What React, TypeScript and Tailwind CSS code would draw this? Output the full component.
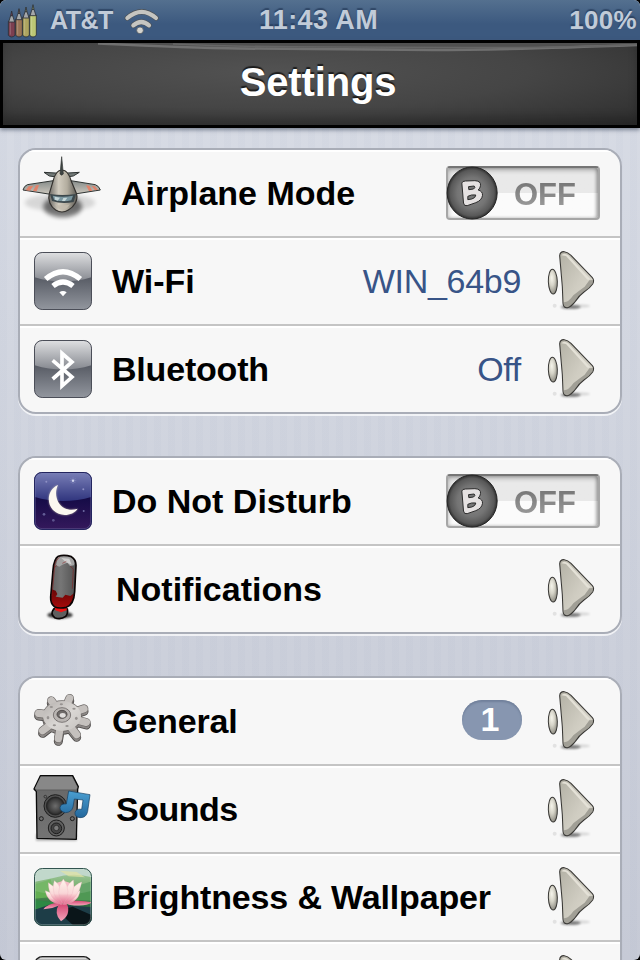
import type { ReactNode } from "react";
import clsx from "clsx";

function IconDefs() {
  return (
    <svg className="absolute h-0 w-0" aria-hidden="true">
      <defs>
        <linearGradient id="steelGloss" x1="0" y1="0" x2="0" y2="1">
          <stop offset="0" stopColor="#dedfe1" />
          <stop offset="1" stopColor="#85888f" />
        </linearGradient>
        <linearGradient id="steelBase" x1="0" y1="0" x2="0" y2="1">
          <stop offset="0.45" stopColor="#595d66" />
          <stop offset="1" stopColor="#92969e" />
        </linearGradient>
        <linearGradient id="night" x1="0" y1="0" x2="0" y2="1">
          <stop offset="0.4" stopColor="#120a45" />
          <stop offset="1" stopColor="#35195c" />
        </linearGradient>
        <linearGradient id="nightGloss" x1="0" y1="0" x2="0" y2="1">
          <stop offset="0" stopColor="#7a80b8" />
          <stop offset="1" stopColor="#30357e" />
        </linearGradient>
        <linearGradient id="stone" x1="0" y1="0" x2="1" y2="1">
          <stop offset="0" stopColor="#b3b1a5" />
          <stop offset="0.55" stopColor="#cfccc1" />
          <stop offset="1" stopColor="#dddacf" />
        </linearGradient>
        <radialGradient id="pebble" cx="0.4" cy="0.35" r="0.7">
          <stop offset="0" stopColor="#f6f5ec" />
          <stop offset="0.45" stopColor="#d5d3c7" />
          <stop offset="1" stopColor="#85837a" />
        </radialGradient>
        <linearGradient id="fuselage" x1="0" y1="0" x2="1" y2="0">
          <stop offset="0" stopColor="#6a6762" />
          <stop offset="0.35" stopColor="#d2ccbf" />
          <stop offset="0.65" stopColor="#b3ad9f" />
          <stop offset="1" stopColor="#5b5954" />
        </linearGradient>
        <linearGradient id="wing" x1="0" y1="0" x2="0" y2="1">
          <stop offset="0" stopColor="#858b89" />
          <stop offset="1" stopColor="#cdc8be" />
        </linearGradient>
        <linearGradient id="blade" x1="0" y1="0" x2="1" y2="0">
          <stop offset="0" stopColor="#606060" />
          <stop offset="0.4" stopColor="#767676" />
          <stop offset="1" stopColor="#515151" />
        </linearGradient>
        <linearGradient id="blood" x1="0" y1="0" x2="0" y2="1">
          <stop offset="0" stopColor="#650606" />
          <stop offset="1" stopColor="#a60a0a" />
        </linearGradient>
        <linearGradient id="gearTop" x1="0" y1="0" x2="1" y2="1">
          <stop offset="0" stopColor="#b4b0ad" />
          <stop offset="0.55" stopColor="#dad7d4" />
          <stop offset="1" stopColor="#c6c3c0" />
        </linearGradient>
        <linearGradient id="cabinet" x1="0" y1="0" x2="0" y2="1">
          <stop offset="0" stopColor="#666" />
          <stop offset="1" stopColor="#747474" />
        </linearGradient>
        <radialGradient id="cone">
          <stop offset="0" stopColor="#6d6d6d" />
          <stop offset="0.75" stopColor="#3c3c3c" />
          <stop offset="1" stopColor="#232323" />
        </radialGradient>
        <linearGradient id="note" x1="0" y1="0" x2="0" y2="1">
          <stop offset="0" stopColor="#4b9fd2" />
          <stop offset="1" stopColor="#23679c" />
        </linearGradient>
        <linearGradient id="pond" x1="0" y1="0" x2="0" y2="1">
          <stop offset="0" stopColor="#9dc49a" />
          <stop offset="0.35" stopColor="#65a659" />
          <stop offset="0.65" stopColor="#2c6a40" />
          <stop offset="1" stopColor="#142d33" />
        </linearGradient>
        <linearGradient id="petal" x1="0" y1="0" x2="0" y2="1">
          <stop offset="0" stopColor="#fff6ea" />
          <stop offset="0.55" stopColor="#f9d0d2" />
          <stop offset="1" stopColor="#df6288" />
        </linearGradient>
        <linearGradient id="petalLow" x1="0" y1="0" x2="0" y2="1">
          <stop offset="0" stopColor="#d44873" />
          <stop offset="1" stopColor="#f4a5bb" />
        </linearGradient>
        <radialGradient id="knob" cx="0.5" cy="0.5" r="0.5">
          <stop offset="0" stopColor="#8b8b8b" />
          <stop offset="0.6" stopColor="#747474" />
          <stop offset="0.88" stopColor="#585858" />
          <stop offset="1" stopColor="#2f2f2f" />
        </radialGradient>
        <filter id="soft" x="-30%" y="-60%" width="160%" height="220%">
          <feGaussianBlur stdDeviation="6" />
        </filter>
        <filter id="softer" x="-30%" y="-60%" width="160%" height="220%">
          <feGaussianBlur stdDeviation="3" />
        </filter>
        <clipPath id="sleepTile">
          <rect x="73" y="67" width="172" height="172" rx="22" />
        </clipPath>
        <clipPath id="lotusTile">
          <rect x="73" y="55" width="172" height="172" rx="24" />
        </clipPath>
      </defs>
    </svg>
  );
}

function AirplaneIcon() {
  return (
    <svg viewBox="36 30 240 258" className="h-[86px] w-20">
      <ellipse cx="150" cy="188" rx="106" ry="26" fill="#000" opacity="0.13" filter="url(#soft)" />
      <ellipse cx="158" cy="200" rx="58" ry="32" fill="#000" opacity="0.5" filter="url(#soft)" />
      <g stroke="#2e3332" strokeWidth="3" strokeLinejoin="round">
        <path d="M152 100 102 97 118 108 148 112Z" fill="#737a78" />
        <path d="M158 100 208 97 190 108 162 112Z" fill="#737a78" />
        <path d="M130 122 52 134Q42 138 39 150L122 163Z" fill="url(#wing)" />
        <path d="M182 122 256 134Q267 138 271 150L194 162Z" fill="url(#wing)" />
      </g>
      <path d="M56 139 70 137 60 152 47 151ZM78 136 87 135 80 154 69 153ZM228 136 238 137 247 152 237 153ZM245 138 254 139 264 149 255 151Z" fill="#e0826a" />
      <path
        d="M156 90C141 90 134 102 129 124L118 160C112 180 122 200 137 210Q156 222 175 210C192 200 206 180 199 160L184 124C178 102 171 90 156 90Z"
        fill="url(#fuselage)"
        stroke="#33312e"
        strokeWidth="3.5"
      />
      <path d="M120 162Q157 168 198 162L191 186Q156 194 126 183Z" fill="#3c484c" />
      <path d="M128 167Q157 173 189 167L184 181Q158 187 132 179Z" fill="#7b97a0" />
      <path d="m134 170 16 3-7 9-8-3ZM160 174l12-1-7 10h-9Z" fill="#c5d6d8" />
      <path d="M134 193q22 7 46 0l-10 12q-13 7-26 0Z" fill="#c3bcae" opacity="0.8" />
      <path d="M155 50 150 102Q155 109 160 102Z" fill="#3e4443" stroke="#333837" strokeWidth="2" />
    </svg>
  );
}

function WifiIcon() {
  return (
    <svg viewBox="72 -6 174 258" className="h-[86px] w-[58px]">
      <rect x="73.5" y="37.5" width="171" height="171" rx="23" fill="url(#steelBase)" />
      <path d="M74 112V60Q74 38 97 38H222Q244 38 244 60V112Q159 138 74 112Z" fill="url(#steelGloss)" />
      <rect x="73.5" y="37.5" width="171" height="171" rx="23" fill="none" stroke="#4b4e58" strokeWidth="3" />
      <g fill="none" stroke="#fff" strokeWidth="16">
        <path d="M107 117Q159 73 211 117" />
        <path d="M129 138Q159 114 189 138" />
      </g>
      <path d="M148 157Q159 149 170 157L159 169Z" fill="#fff" />
    </svg>
  );
}

function BluetoothIcon() {
  return (
    <svg viewBox="72 258 174 258" className="h-[86px] w-[58px]">
      <rect x="73.5" y="301.5" width="171" height="171" rx="23" fill="url(#steelBase)" />
      <path d="M74 376V324Q74 302 97 302H222Q244 302 244 324V376Q159 402 74 376Z" fill="url(#steelGloss)" />
      <rect x="73.5" y="301.5" width="171" height="171" rx="23" fill="none" stroke="#4b4e58" strokeWidth="3" />
      <path d="M128 361 186 411 156 438V340L186 366 128 417" fill="none" stroke="#fff" strokeWidth="11" />
    </svg>
  );
}

function MoonIcon() {
  return (
    <svg viewBox="72 24 174 258" className="h-[86px] w-[58px]">
      <g clipPath="url(#sleepTile)">
        <rect x="72" y="66" width="174" height="174" fill="url(#night)" />
        <path d="M72 66H246V140Q159 166 72 140Z" fill="url(#nightGloss)" />
      </g>
      <path d="M144 105C114 118 107 157 130 181C151 202 188 198 203 176C181 184 157 177 146 158C136 141 136 121 144 105Z" fill="#d7cdb5" opacity="0.7" filter="url(#softer)" />
      <path d="M144 105C114 118 107 157 130 181C151 202 188 198 203 176C181 184 157 177 146 158C136 141 136 121 144 105Z" fill="#fbf8f0" />
      <path d="M189 82V102M179 92H199M182 85l14 14M196 85l-14 14" stroke="#a4a9d6" strokeWidth="1" />
      <circle cx="189" cy="92" r="3.5" fill="#d0d4ee" />
      <g fill="#8e90c4">
        <circle cx="109" cy="95" r="3" />
        <circle cx="220" cy="118" r="3" />
        <circle cx="221" cy="183" r="3" opacity="0.7" />
        <circle cx="102" cy="193" r="4" opacity="0.6" />
        <circle cx="130" cy="211" r="4" opacity="0.5" />
      </g>
      <rect x="76" y="70" width="166" height="166" rx="20" fill="none" stroke="#8084b8" strokeWidth="2" opacity="0.55" />
      <rect x="73.5" y="67.5" width="171" height="171" rx="22" fill="none" stroke="#23255f" strokeWidth="3" />
    </svg>
  );
}

function BladeIcon() {
  return (
    <svg viewBox="72 288 174 258" className="h-[86px] w-[58px]">
      <ellipse cx="150" cy="495" rx="38" ry="11" fill="#000" opacity="0.75" filter="url(#softer)" />
      <path d="M131 477Q150 466 172 477Q175 490 167 499Q152 510 134 503Q120 492 131 477Z" fill="#5f5f5f" stroke="#0b0505" strokeWidth="5" />
      <path d="M134 472h36v9l-17 6-17-6Z" fill="#f01414" />
      <path
        d="M145 319Q162 313 184 320Q198 328 198 346L194 424Q192 464 169 472Q147 477 133 470Q121 460 122 441L129 360Q132 326 145 319Z"
        fill="url(#blade)"
      />
      <path d="M145 319Q162 313 184 320Q196 330 192 346L180 348 172 338 157 344 148 350 138 346Z" fill="#a3a3a3" />
      <path d="M154 324 178 326 185 344 167 336Z" fill="#e2e2e2" opacity="0.7" />
      <path d="M125 418 137 422 142 432 137 440 158 443 166 434 181 438 192 430Q190 464 169 471Q147 476 133 468Q122 458 123 441Z" fill="url(#blood)" />
      <path d="M181 348 190 358 187 416M134 352 141 346M157 340 169 334" fill="none" stroke="#8d1717" strokeWidth="1.5" />
      <path
        d="M145 319Q162 313 184 320Q198 328 198 346L194 424Q192 464 169 472Q147 477 133 470Q121 460 122 441L129 360Q132 326 145 319Z"
        fill="none"
        stroke="#0b0505"
        strokeWidth="5"
      />
      <path d="M149 322Q132 332 133 360L126 438" fill="none" stroke="#901111" strokeWidth="1.5" />
    </svg>
  );
}

const TEETH = "M156 138 179 85M156 138 124 92M156 138 86 130M156 138 98 182M156 138 145 206M156 138 200 194M156 138 229 157M156 138 222 116";

function GearIcon() {
  return (
    <svg viewBox="72 24 174 258" className="h-[86px] w-[58px]">
      <g fill="none" strokeLinecap="round" transform="translate(0 8)">
        <path d={TEETH} stroke="#4a4746" strokeWidth="27" />
        <ellipse cx="156" cy="138" rx="59" ry="48" fill="#4a4746" />
        <path d={TEETH} stroke="#8b8785" strokeWidth="22" />
        <ellipse cx="156" cy="138" rx="57" ry="46" fill="#8b8785" />
      </g>
      <g fill="none" strokeLinecap="round">
        <path d={TEETH} stroke="#6b6765" strokeWidth="26" />
        <ellipse cx="156" cy="138" rx="59" ry="47" fill="#6b6765" />
        <path d={TEETH} stroke="#c5c1be" strokeWidth="22" />
      </g>
      <ellipse cx="156" cy="138" rx="57" ry="45" fill="url(#gearTop)" />
      <g fill="#979391">
        <ellipse cx="154" cy="103" rx="5" ry="3" />
        <ellipse cx="124" cy="111" rx="5" ry="3" />
        <ellipse cx="114" cy="143" rx="4" ry="5" />
        <ellipse cx="133" cy="166" rx="5" ry="3" />
        <ellipse cx="171" cy="168" rx="5" ry="3" />
        <ellipse cx="199" cy="145" rx="4" ry="5" />
        <ellipse cx="192" cy="116" rx="5" ry="3" />
      </g>
      <ellipse cx="156" cy="135" rx="26" ry="22" fill="#b9b5b2" stroke="#6c6866" strokeWidth="2.5" />
      <ellipse cx="156" cy="133" rx="15" ry="12" fill="#6f6b69" stroke="#484543" strokeWidth="2.5" />
      <ellipse cx="158" cy="136" rx="9" ry="7" fill="#e0dedc" />
    </svg>
  );
}

function SpeakerIcon() {
  return (
    <svg viewBox="69 288 174 258" className="h-[86px] w-[58px]">
      <rect x="78" y="492" width="122" height="20" fill="#000" opacity="0.3" filter="url(#softer)" />
      <path d="M91 317H188L205 350 203 358 199 508 81 505 79 365 72 357Z" fill="url(#cabinet)" stroke="#0a0a0a" strokeWidth="4" strokeLinejoin="round" />
      <path d="M92 320H186L202 352 198 359H80L75 355Z" fill="#888" />
      <path d="M78 360H200" stroke="#555" strokeWidth="2" />
      <g stroke="#1d1d1d">
        <circle cx="136" cy="408" r="34" fill="#505050" strokeWidth="3" />
        <circle cx="136" cy="408" r="27" fill="url(#cone)" strokeWidth="2" />
        <circle cx="139" cy="474" r="24" fill="#606060" strokeWidth="3" />
        <circle cx="139" cy="475" r="16" fill="#454545" strokeWidth="3" />
        <circle cx="139" cy="474" r="8" fill="#7b7b7b" strokeWidth="2" />
        <circle cx="94" cy="446" r="6" fill="#6f6f6f" strokeWidth="3" />
        <circle cx="187" cy="446" r="6" fill="#6f6f6f" strokeWidth="3" />
        <circle cx="106" cy="380" r="4" fill="#6f6f6f" strokeWidth="2" />
      </g>
      <path
        d="M176 363 240 374 233 424Q229 444 210 443Q194 441 195 428Q197 415 215 418L219 390 193 387 189 411Q185 427 166 428Q150 424 150 413Q152 400 169 402Z"
        fill="url(#note)"
        stroke="#123e62"
        strokeWidth="2"
        strokeLinejoin="round"
      />
    </svg>
  );
}

function LotusIcon() {
  return (
    <svg viewBox="72 12 174 258" className="h-[86px] w-[58px]">
      <g clipPath="url(#lotusTile)">
        <rect x="72" y="54" width="174" height="174" fill="url(#pond)" />
        <path d="M72 54H246V82Q190 66 130 84L72 96Z" fill="#b9d3c4" />
        <path d="M150 62 200 66 225 82 176 79Z" fill="#dfdf98" opacity="0.7" />
        <path d="M72 104 122 88 134 140 72 146Z" fill="#62ae52" />
        <path d="M200 108 246 94V152L190 150Z" fill="#4f9854" />
        <path d="M72 150 144 158 92 180 72 176Z" fill="#2d8844" />
        <path d="M72 180 124 162 246 172V228H72Z" fill="#1d3d47" />
        <path d="M144 182 188 170 246 196V228H192L172 210Z" fill="#0a1519" />
        <path d="M150 158Q116 157 100 178Q128 176 154 164Z" fill="url(#petalLow)" />
        <path d="M166 155Q208 148 246 157Q226 172 176 164Z" fill="url(#petalLow)" />
        <path d="M147 162Q130 192 153 214Q184 194 171 162Z" fill="url(#petalLow)" />
        <path d="M122 118 136 100 160 92 184 100 200 118 178 160 146 160Z" fill="#f4b5c0" />
        <g fill="url(#petal)" stroke="#eba9b8" strokeWidth="1">
          <path d="M106 122Q134 130 152 163Q112 158 106 122Z" />
          <path d="M210 122Q184 130 166 163Q206 156 210 122Z" />
          <path d="M115 98Q148 116 154 164Q116 148 115 98Z" />
          <path d="M215 96Q178 110 164 164Q206 146 215 96Z" />
          <path d="M133 92Q160 110 156 164Q120 136 133 92Z" />
          <path d="M190 90Q158 112 162 164Q198 134 190 90Z" />
          <path d="M160 87Q132 128 160 164Q188 126 160 87Z" />
        </g>
        <path d="M72 54H246V122Q159 146 72 122Z" fill="#fff" opacity="0.12" />
      </g>
      <rect x="76" y="58" width="166" height="166" rx="21" fill="none" stroke="#d7e8e2" strokeWidth="2" opacity="0.5" />
      <rect x="73.5" y="55.5" width="171" height="171" rx="24" fill="none" stroke="#31534f" strokeWidth="3" />
    </svg>
  );
}

function BlankTileIcon() {
  return (
    <svg viewBox="72 276 174 258" className="h-[86px] w-[58px]">
      <rect x="75" y="320" width="168" height="170" rx="22" fill="#b4b4b4" stroke="#1d1d1d" strokeWidth="4" />
      <path d="M90 325H228" stroke="#dedede" strokeWidth="3" />
    </svg>
  );
}

function Arrow() {
  return (
    <svg viewBox="348 294 156 258" className="mr-[22px] h-[86px] w-[52px] shrink-0">
      <ellipse cx="422" cy="501" rx="30" ry="6" fill="#000" opacity="0.45" filter="url(#softer)" />
      <ellipse cx="448" cy="498" rx="32" ry="5" fill="#000" opacity="0.12" filter="url(#softer)" />
      <circle cx="374" cy="497" r="6" fill="#e2e2e2" />
      <ellipse cx="368.5" cy="425" rx="13.5" ry="37" fill="url(#pebble)" stroke="#3a3936" strokeWidth="3" transform="rotate(-2 368 425)" />
      <path
        d="M389 347Q390 334 403 335Q413 336 423 346L487 413Q494 421 488 432Q480 444 462 456Q448 466 436 484Q424 500 412 503Q400 504 399 490L397 440Z"
        fill="url(#stone)"
      />
      <path d="M478 421 489 420Q491 431 472 447 448 464 436 482 422 501 410 501 400 500 401 487 415 488 430 466 447 452 464 440Z" fill="#a19f96" />
      <path d="M394 346Q402 337 415 346L481 418Q475 421 471 418L408 348Z" fill="#e4e1d7" />
      <path
        d="M389 347Q390 334 403 335Q413 336 423 346L487 413Q494 421 488 432Q480 444 462 456Q448 466 436 484Q424 500 412 503Q400 504 399 490L397 440Z"
        fill="none"
        stroke="#3a3936"
        strokeWidth="3.2"
      />
    </svg>
  );
}

function Toggle() {
  return (
    <div className="mr-5 flex h-[54px] w-[154px] shrink-0 items-center rounded-[4px] border-2 border-[#a6a6a6] border-t-[#757575] bg-linear-to-b from-[#e9e9e9] from-50% to-[#fbfbfb] to-50% shadow-[inset_0_2px_5px_rgba(0,0,0,0.3),inset_-2px_0_3px_rgba(0,0,0,0.2)]">
      <svg viewBox="50 77 155 162" className="-ml-[2px] h-[54px] w-[52px] shrink-0">
        <ellipse cx="128" cy="158" rx="75" ry="78" fill="url(#knob)" stroke="#252525" strokeWidth="3" />
        <path
          d="M97 128Q98 122 108 122L136 121Q155 122 153 136Q152 144 146 149Q160 153 159 165Q157 180 139 187L113 196Q103 198 102 188Z"
          fill="#e5e1e1"
          stroke="#2b2b2b"
          strokeWidth="3"
        />
        <path d="M117 139 134 137Q139 142 132 146L118 148ZM115 168Q125 162 139 164Q138 173 127 176L115 178Z" fill="#777" stroke="#2b2b2b" strokeWidth="3" />
      </svg>
      <span className="mt-[3px] ml-4 bg-linear-to-b from-[#707070] to-[#a3a3a3] bg-clip-text text-[31px] leading-9 font-bold text-transparent">OFF</span>
    </div>
  );
}

interface RowProps {
  icon: ReactNode;
  label: string;
  value?: string;
  badge?: number;
  toggle?: boolean;
  iconClass?: string;
  labelClass?: string;
}

function Row({ icon, label, value, badge, toggle, iconClass = "ml-3.5", labelClass = "ml-5" }: RowProps) {
  return (
    <div className="flex h-22 shrink-0 items-center border-b-2 border-[#c4c4c4] shadow-[inset_0_2px_0_#fff] last:h-[86px] last:border-b-0">
      <div className={clsx("shrink-0", iconClass)}>{icon}</div>
      <span className={clsx("flex-1 text-[34px] leading-10 font-bold whitespace-nowrap text-black", labelClass)}>{label}</span>
      {value && <span className="mr-[25px] text-[34px] leading-10 tracking-[-0.3px] text-[#385487]">{value}</span>}
      {badge && (
        <span className="mr-6 flex h-10 w-[60px] -translate-y-px items-center justify-center rounded-full bg-[#8796b0] pr-1 pb-0.5 text-[34px] leading-none font-bold text-white shadow-[inset_0_2px_2px_#71809b]">
          {badge}
        </span>
      )}
      {toggle ? <Toggle /> : <Arrow />}
    </div>
  );
}

function Group({ children }: { children: ReactNode }) {
  return (
    <section className="shrink-0 overflow-hidden rounded-[18px] border-2 border-[#a9adb7] bg-[#f7f7f7] shadow-[0_2px_0_rgba(255,255,255,0.7)]">
      {children}
    </section>
  );
}

function StatusBar() {
  return (
    <header className="flex h-10 shrink-0 items-center bg-linear-to-b from-[#54708f] to-[#3c597f] to-60% text-[26px] leading-10 font-bold text-[#c1cbd8] [text-shadow:0_-2px_1px_rgba(30,50,80,0.6)]">
      <div className="flex flex-1 items-center">
        <svg viewBox="21 0 93 120" className="ml-[7px] h-10 w-[31px]">
          {[
            { x: 25, y: 64, c: "#7c3f50" },
            { x: 47, y: 57, c: "#997455" },
            { x: 68, y: 52, c: "#ada45f" },
            { x: 89, y: 45, c: "#bcc774" },
          ].map((p) => (
            <g key={p.x} transform={`translate(${p.x} ${p.y})`} stroke="#2b3037" strokeWidth="2.5">
              <path d={`M0 0V${106 - p.y}Q10 ${116 - p.y} 20 ${106 - p.y}V0Z`} fill={p.c} />
              <path d="M1 2 7-17H13L19 2Z" fill="#a4a7a9" />
              <path d="M7-17 10-31 13-17Z" fill={p.c} />
              <path d={`M6 4V${104 - p.y}`} stroke="#fff" strokeOpacity="0.2" strokeWidth="3" />
            </g>
          ))}
        </svg>
        <span className="ml-3 text-[25px] tracking-[-0.5px]">AT&amp;T</span>
        <svg viewBox="372 0 108 120" className="ml-[11px] h-10 w-9">
          <g fill="none" stroke="#4c5054" strokeWidth="16" strokeLinecap="round">
            <path d="M382 54Q425 17 468 54" />
            <path d="M400 76Q424 56 447 76" />
          </g>
          <g fill="none" stroke="#c5c5c1" strokeWidth="12.5" strokeLinecap="round">
            <path d="M382 54Q425 17 468 54" />
            <path d="M400 76Q424 56 447 76" />
          </g>
          <circle cx="420" cy="91" r="10" fill="#d4d4cf" stroke="#4c5054" strokeWidth="2" />
        </svg>
      </div>
      <span className="text-[27px] tracking-[0.4px]">11:43 AM</span>
      <span className="flex-1 pr-[3px] text-right tracking-[0.3px]">100%</span>
    </header>
  );
}

function NavBar() {
  return (
    <div className="relative z-10 flex h-22 shrink-0 items-center justify-center border-3 border-black bg-[radial-gradient(ellipse_at_42%_35%,#525252_0%,#454545_50%,#2d2d2d_100%)] shadow-[0_2px_4px_rgba(60,70,90,0.6),inset_0_-8px_10px_rgba(0,0,0,0.2)]">
      <svg viewBox="0 0 634 12" className="absolute inset-x-0 top-0 h-3 w-full">
        <path d="M90 0H634V2Q500 8 430 7L235 6Q160 3 90 0Z" fill="#505050" />
        <path d="M95 0.5Q190 5 235 5.5L430 7Q500 7 634 2" fill="none" stroke="#707070" strokeWidth="2.5" />
        <path d="M170 1Q240 4 330 4L460 4.5Q560 5 634 1.5" fill="none" stroke="#666" strokeWidth="1.5" />
      </svg>
      <h1 className="-mt-1 -ml-1 text-[40px] leading-none font-bold tracking-[-0.15px] text-white [text-shadow:0_-2px_1px_rgba(0,0,0,0.65)]">Settings</h1>
    </div>
  );
}

export default function App() {
  return (
    <div className="relative h-[960px] w-[640px] overflow-hidden bg-black font-['Liberation_Sans',Arial,sans-serif]">
      <IconDefs />
      <div className="flex h-full flex-col overflow-hidden rounded-[6px] bg-linear-to-b from-[#d9dde6] to-[#c6cad6]">
        <StatusBar />
        <NavBar />
        <main className="flex min-h-0 flex-1 flex-col gap-[42px] overflow-hidden bg-[repeating-linear-gradient(90deg,rgba(120,135,170,0.03)_0px,rgba(120,135,170,0.03)_7px,transparent_7px,transparent_14px)] px-[18px] pt-5">
          <Group>
            <Row icon={<AirplaneIcon />} label="Airplane Mode" toggle iconClass="ml-0.5" labelClass="ml-[19px]" />
            <Row icon={<WifiIcon />} label="Wi-Fi" value="WIN_64b9" />
            <Row icon={<BluetoothIcon />} label="Bluetooth" value="Off" labelClass="ml-5 tracking-[-0.2px]" />
          </Group>
          <Group>
            <Row icon={<MoonIcon />} label="Do Not Disturb" toggle />
            <Row icon={<BladeIcon />} label="Notifications" labelClass="ml-6" />
          </Group>
          <Group>
            <Row icon={<GearIcon />} label="General" badge={1} labelClass="ml-5 tracking-[-0.15px]" />
            <Row icon={<SpeakerIcon />} label="Sounds" iconClass="ml-[13px]" labelClass="ml-[25px] tracking-[-0.5px]" />
            <Row icon={<LotusIcon />} label="Brightness &amp; Wallpaper" labelClass="ml-5 tracking-[-0.15px]" />
            <Row icon={<BlankTileIcon />} label="" />
          </Group>
        </main>
      </div>
    </div>
  );
}
